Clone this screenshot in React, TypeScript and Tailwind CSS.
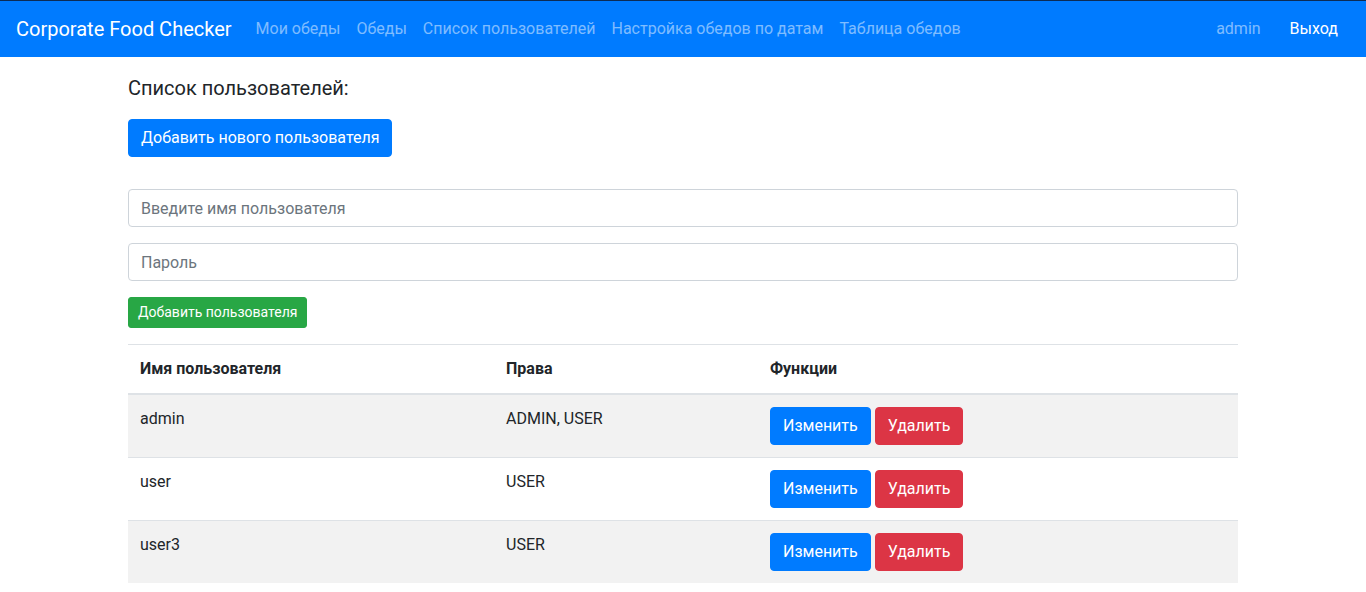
import React from 'react'

const NAV_LINKS = ['Мои обеды', 'Обеды', 'Список пользователей', 'Настройка обедов по датам', 'Таблица обедов']

const USERS = [
  { name: 'admin', roles: 'ADMIN, USER' },
  { name: 'user', roles: 'USER' },
  { name: 'user3', roles: 'USER' },
]

function Navbar() {
  return (
    <nav className="flex items-center h-[57px] border-t border-[#0c2b55] bg-[#007bff] px-4">
      <span className="text-[20px] leading-[30px] text-white mr-4">Corporate Food Checker</span>
      <ul className="flex items-center">
        {NAV_LINKS.map((l) => (
          <li key={l} className="px-2 text-[16px] leading-6 text-white/50">
            {l}
          </li>
        ))}
      </ul>
      <div className="ml-auto flex items-center">
        <span className="px-2 text-[16px] leading-6 text-white/50">admin</span>
        <span className="ml-[9px] px-3 text-[16px] leading-6 text-white">Выход</span>
      </div>
    </nav>
  )
}

export default function App() {
  return (
    <div className="min-h-screen bg-white font-['Roboto','Liberation_Sans',sans-serif] text-[#212529]">
      <Navbar />
      <main className="w-[1140px] mx-auto px-[15px]">
        <h5 className="mt-[19px] text-[20px] leading-6 font-normal">Список пользователей:</h5>
        <button className="mt-[19px] h-[38px] px-3 rounded-[4px] border border-[#007bff] bg-[#007bff] text-white text-[16px] leading-6">
          Добавить нового пользователя
        </button>
        <div className="mt-8 flex flex-col gap-4">
          <input
            className="h-[38px] w-full rounded-[4px] border border-[#ced4da] px-3 text-[16px] placeholder:text-[#6c757d] outline-none"
            placeholder="Введите имя пользователя"
          />
          <input
            className="h-[38px] w-full rounded-[4px] border border-[#ced4da] px-3 text-[16px] placeholder:text-[#6c757d] outline-none"
            placeholder="Пароль"
          />
        </div>
        <button className="mt-4 h-[31px] px-[9px] rounded-[3px] border border-[#28a745] bg-[#28a745] text-white text-[14px] leading-[21px]">
          Добавить пользователя
        </button>
        <table className="mt-4 w-full border-collapse text-[16px] leading-6">
          <thead>
            <tr>
              <th className="w-[366px] text-left font-bold p-3 border-t border-b-2 border-[#dee2e6]">Имя пользователя</th>
              <th className="w-[264px] text-left font-bold p-3 border-t border-b-2 border-[#dee2e6]">Права</th>
              <th className="text-left font-bold p-3 border-t border-b-2 border-[#dee2e6]">Функции</th>
            </tr>
          </thead>
          <tbody>
            {USERS.map((u, i) => (
              <tr key={u.name} className={i % 2 === 0 ? 'bg-[#f2f2f2]' : ''}>
                <td className="p-3 align-top border-t border-[#dee2e6]">{u.name}</td>
                <td className="p-3 align-top border-t border-[#dee2e6]">{u.roles}</td>
                <td className="p-3 align-top border-t border-[#dee2e6]">
                  <div className="flex gap-1">
                    <button className="h-[38px] px-3 rounded-[4px] border border-[#007bff] bg-[#007bff] text-white">Изменить</button>
                    <button className="h-[38px] px-3 rounded-[4px] border border-[#dc3545] bg-[#dc3545] text-white">Удалить</button>
                  </div>
                </td>
              </tr>
            ))}
          </tbody>
        </table>
      </main>
    </div>
  )
}
